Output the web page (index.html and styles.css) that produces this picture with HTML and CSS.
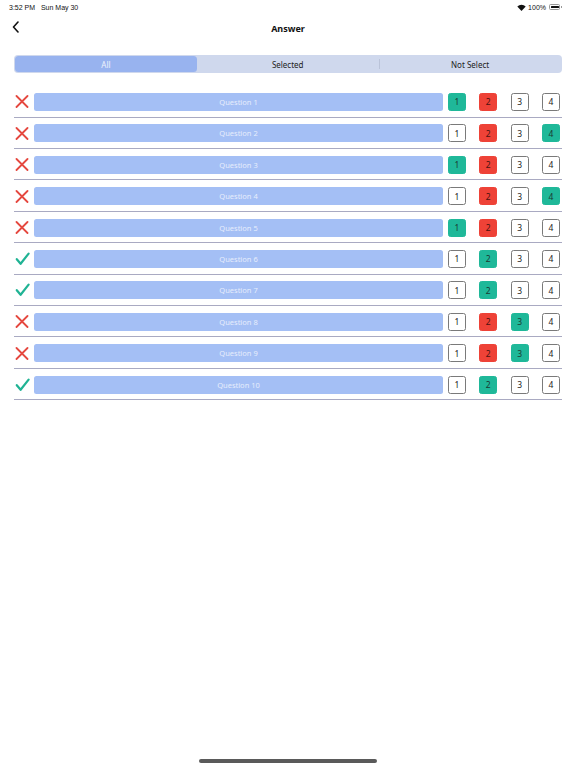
FILE: index.html
```html
<!DOCTYPE html>
<html>
<head>
<meta charset="utf-8">
<link rel="stylesheet" href="styles.css">
</head>
<body>
<div class="screen">
  <div class="status">
    <span class="time">3:52 PM&nbsp;&nbsp;&nbsp;Sun May 30</span>
    <span class="right">
      <svg class="wifi" width="9" height="7" viewBox="0 0 9 7"><path d="M4.5 7 L0.3 2.4 A6 6 0 0 1 8.7 2.4 Z" fill="#111"/></svg>
      <span class="pct">100%</span>
      <span class="battery"><span class="fill"></span></span><span class="nub"></span>
    </span>
  </div>
  <div class="nav">
    <svg class="back" width="8" height="12" viewBox="0 0 8 12"><path d="M6 1 L1.5 6 L6 11" fill="none" stroke="#111" stroke-width="1.6" stroke-linecap="round" stroke-linejoin="round"/></svg>
    <div class="title">Answer</div>
  </div>
  <div class="segment">
    <div class="seg active">All</div>
    <div class="seg">Selected</div>
    <div class="div"></div>
    <div class="seg">Not Select</div>
  </div>
  <div class="list" id="list"></div>
</div>
<div class="home"></div>
<script>
const data = [
  [0,[1,2]],[0,[4,2]],[0,[1,2]],[0,[4,2]],[0,[1,2]],
  [1,[2,2]],[1,[2,2]],[0,[3,2]],[0,[3,2]],[1,[2,2]]
];
const X = '<svg width="14" height="13" viewBox="0 0 14 13"><path d="M1.5 1 L12.5 12 M12.5 1 L1.5 12" stroke="#e5483f" stroke-width="1.8" stroke-linecap="round"/></svg>';
const V = '<svg width="15" height="14" viewBox="0 0 15 14"><path d="M1.8 7.2 L5.6 11.8 L13.6 1.6" fill="none" stroke="#20b394" stroke-width="2.2" stroke-linecap="round" stroke-linejoin="round"/></svg>';
const list = document.getElementById('list');
data.forEach((d, i) => {
  const [ok, [correct, wrong]] = d;
  let boxes = '';
  for (let n = 1; n <= 4; n++) {
    let cls = 'box';
    if (n === correct) cls += ' green';
    else if (n === wrong && !ok) cls += ' red';
    boxes += '<div class="' + cls + '">' + n + '</div>';
  }
  const row = document.createElement('div');
  row.className = 'row';
  row.innerHTML = '<div class="icon">' + (ok ? V : X) + '</div><div class="bar">Question ' + (i + 1) + '</div><div class="boxes">' + boxes + '</div>';
  list.appendChild(row);
});
</script>
</body>
</html>
```
FILE: styles.css
```css
html, body {
  margin: 0;
  padding: 0;
  background: #ffffff;
}
body {
  width: 576px;
  height: 768px;
  position: relative;
  overflow: hidden;
  font-family: "Noto Sans", "DejaVu Sans", sans-serif;
  color: #111;
}
.status {
  height: 14px;
  display: flex;
  justify-content: space-between;
  align-items: center;
  padding: 0 14px 0 9px;
  font-family: "Liberation Sans", Arial, sans-serif;
  font-size: 7px;
  color: #111;
}
.status .right {
  display: flex;
  align-items: center;
  gap: 2px;
}
.battery {
  display: inline-block;
  width: 11px;
  height: 5.5px;
  border: 0.8px solid #999;
  border-radius: 1.5px;
  padding: 0.5px;
  box-sizing: border-box;
  margin-left: 1px;
}
.battery .fill {
  display: block;
  width: 100%;
  height: 100%;
  background: #111;
  border-radius: 0.5px;
}
.nub {
  display: inline-block;
  width: 1px;
  height: 2px;
  background: #999;
  margin-left: -1px;
}
.nav {
  height: 28px;
  display: flex;
  align-items: center;
  justify-content: center;
  position: relative;
}
.back {
  position: absolute;
  left: 12px;
  top: 7px;
}
.title {
  font-size: 9px;
  font-weight: 700;
  color: #111;
}
.segment {
  margin: 13px 14px 0;
  height: 18px;
  background: #cfd8ed;
  border-radius: 4px;
  display: flex;
  align-items: center;
  padding: 1px;
  box-sizing: border-box;
}
.seg {
  flex: 1;
  height: 100%;
  display: flex;
  align-items: center;
  justify-content: center;
  font-size: 8px;
  color: #222;
}
.seg.active {
  background: #98b3ef;
  color: #eef2fc;
  border-radius: 3.5px;
}
.div {
  width: 0.6px;
  height: 10px;
  background: #bac3d9;
}
.list {
  margin: 13.3px 14px 0;
}
.row {
  display: flex;
  align-items: center;
  height: 31.4px;
  box-sizing: border-box;
  padding: 6.7px 2px 5.7px 0;
  border-bottom: 1px solid #a9aac2;
}
.icon {
  width: 20px;
  height: 18px;
  display: flex;
  align-items: center;
  padding-left: 1px;
  box-sizing: border-box;
}
.bar {
  width: 409px;
  height: 18px;
  background: #a4bff5;
  border-radius: 2.5px;
  display: flex;
  align-items: center;
  justify-content: center;
  font-size: 7.5px;
  color: #e6edfc;
}
.boxes {
  margin-left: 5px;
  display: flex;
  gap: 13.3px;
}
.box {
  width: 18px;
  height: 18px;
  box-sizing: border-box;
  border: 1px solid #7a7a7a;
  border-radius: 2.5px;
  background: #fff;
  display: flex;
  align-items: center;
  justify-content: center;
  font-size: 8.5px;
  color: #222;
}
.box.green {
  background: #1fb899;
  border-color: #1fb899;
  color: #1a3a33;
}
.box.red {
  background: #ee4237;
  border-color: #ee4237;
  color: #4a1210;
}
.home {
  position: absolute;
  left: 199px;
  top: 759px;
  width: 178px;
  height: 4px;
  border-radius: 2px;
  background: #5a5a5a;
}
```
